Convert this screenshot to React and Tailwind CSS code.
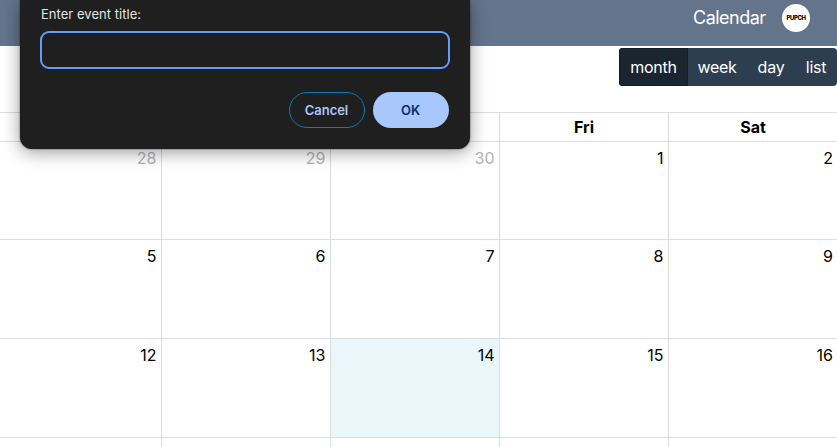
const weekdays = ['Tue', 'Wed', 'Thu', 'Fri', 'Sat'];

const weeks = [
  { height: 'h-[98px]', days: [28, 29, 30, 1, 2] },
  { height: 'h-[99px]', days: [5, 6, 7, 8, 9] },
  { height: 'h-[99px]', days: [12, 13, 14, 15, 16] },
];

const columns = 'grid grid-cols-[162px_169px_169px_169px_168px]';

function Header() {
  return (
    <header className="flex h-[46px] items-start justify-end bg-[#64748b] pr-[27px] pt-1 text-white">
      <a className="mr-[17px] w-[72px] whitespace-nowrap text-[18px] leading-7 tracking-[-0.52px]">Calendar</a>
      <div className="flex size-7 items-center justify-center rounded-full bg-white text-[6px] font-extrabold leading-none tracking-[-0.45px] text-black">
        PUPCH
      </div>
    </header>
  );
}

function ViewSwitch() {
  const button = 'flex items-center justify-center whitespace-nowrap';
  return (
    <div className="flex h-[38px] w-[218px] overflow-hidden rounded bg-[#2c3e50] text-[16px] tracking-[-0.25px] text-white">
      <button className={`${button} w-[69px] border border-[#151e27] bg-[#1a252f]`}>month</button>
      <button className={`${button} w-[58px]`}>week</button>
      <button className={`${button} w-[50px]`}>day</button>
      <button className={`${button} w-[41px] pr-px`}>list</button>
    </div>
  );
}

function MonthGrid() {
  return (
    <section className="mt-[26px] border-t border-[#ddd] text-[16px] text-black">
      <div className={`${columns} h-[29px] border-b border-[#ddd]`}>
        {weekdays.map((day) => (
          <div key={day} className="flex items-center justify-center border-r border-[#ddd] font-bold last:border-r-0">
            {day}
          </div>
        ))}
      </div>
      {weeks.map((week) => (
        <div key={week.days[0]} className={`${columns} ${week.height} border-b border-[#ddd]`}>
          {week.days.map((day) => (
            <div
              key={day}
              className={`border-r border-[#ddd] pr-[4.5px] pt-1 text-right leading-6 last:border-r-0 last:pr-1 ${
                day > 27 ? 'text-[#b2b2b2]' : ''
              } ${day === 14 ? 'bg-[#e9f7fb]' : ''}`}
            >
              {day}
            </div>
          ))}
        </div>
      ))}
      <div className={`${columns} h-[9px]`}>
        {weekdays.map((day) => (
          <div key={day} className="border-r border-[#ddd] last:border-r-0" />
        ))}
      </div>
    </section>
  );
}

function EventPrompt() {
  return (
    <div className="absolute left-5 top-0 h-[149px] w-[450px] rounded-b-xl bg-[#1f1f1f] px-5 pt-[5px] shadow-[0_3px_18px_rgba(0,0,0,0.4),0_0_2px_rgba(0,0,0,0.6)]">
      <label className="block h-[26px] pl-px text-[13px] leading-[19px] tracking-[0.04px] text-[#e3e3e3]">
        Enter event title:
      </label>
      <input className="block h-[38px] w-[410px] rounded-[9px] border-2 border-[#669df6] bg-transparent px-3 text-[13px] text-[#e3e3e3] outline-none" />
      <div className="mt-[23px] flex justify-end gap-2 pr-px text-[13px] font-semibold">
        <button className="h-9 w-[76px] rounded-full border border-[#047db7] pt-px pr-px tracking-[-0.03px] text-[#a8c7fa]">Cancel</button>
        <button className="h-9 w-[76px] rounded-full bg-[#a8c7fa] pt-px pr-px text-[#062e6f]">OK</button>
      </div>
    </div>
  );
}

export default function App() {
  return (
    <main className="relative h-[447px] w-[837px] overflow-hidden bg-white font-[Inter,sans-serif]">
      <Header />
      <div className="mt-0.5 flex justify-end">
        <ViewSwitch />
      </div>
      <MonthGrid />
      <EventPrompt />
    </main>
  );
}
